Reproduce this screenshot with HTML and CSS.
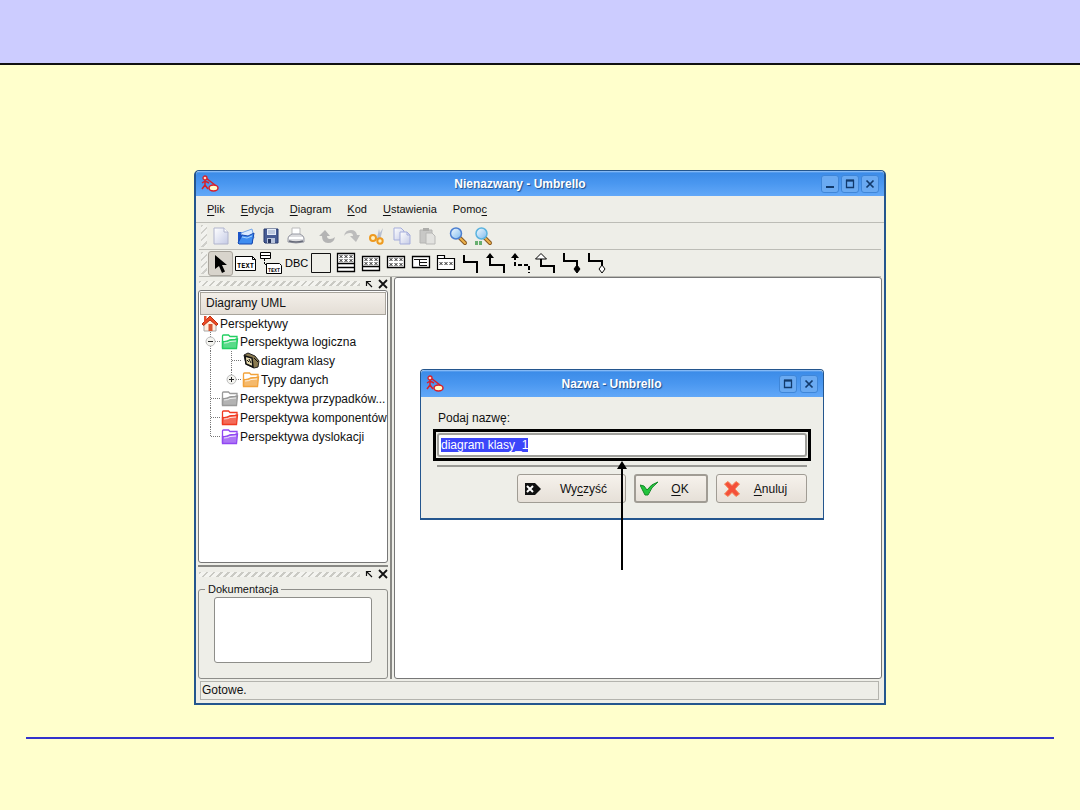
FILE: index.html
```html
<!DOCTYPE html>
<html lang="pl">
<head>
<meta charset="utf-8">
<title>Nienazwany - Umbrello</title>
<link rel="stylesheet" href="styles.css">
</head>
<body>
<svg class="defs" aria-hidden="true">
  <defs>
    <linearGradient id="paper" x1="0" y1="0" x2="1" y2="1"><stop offset="0" stop-color="#fff"/><stop offset="1" stop-color="#c5cbe6"/></linearGradient>
    <linearGradient id="lens" x1="0" y1="0" x2="1" y2="1"><stop offset="0" stop-color="#f4fbff"/><stop offset="1" stop-color="#7db9ee"/></linearGradient>
    <symbol id="app" viewBox="0 0 18 18">
      <path d="M4 5v5M1 8l3-2 4 2M4 10l-3 4M4 10l3 4M5 3l9 7" fill="none" stroke="#d8202a" stroke-width="1.5"/>
      <circle cx="4" cy="3" r="2" fill="#ffd9c8" stroke="#d8202a" stroke-width="1.3"/>
      <ellipse cx="12.500" cy="13" rx="4.500" ry="3" fill="#fffbc8" stroke="#d8202a" stroke-width="1.5"/>
    </symbol>
    <symbol id="folder" viewBox="0 0 18 17">
      <path d="M1.500 15V3q0-1 1-1h5l1.500 1.500h7V7" fill="#fff" fill-opacity=".6" stroke="currentColor" stroke-width="1.300"/>
      <path d="M1.500 15.500V8.500q4 .5 7-1.500l8-1-1 9.500z" fill="currentColor" fill-opacity=".75" stroke="currentColor" stroke-width="1.300"/>
      <path d="M3 5.500h11M3 10q4 0 6-1.500l6-.5" fill="none" stroke="#fff" stroke-opacity=".8"/>
    </symbol>
    <symbol id="xrow" viewBox="0 0 13 3" overflow="visible">
      <path d="M0 0l3 3M3 0L0 3M5 0l3 3M8 0L5 3M10 0l3 3M13 0l-3 3" stroke="#111" stroke-width=".9"/>
    </symbol>
    <symbol id="float" viewBox="0 0 8 8"><path d="M1.500 6V1.500H6M1.500 1.500L7 7" fill="none" stroke="#111" stroke-width="1.200"/></symbol>
    <symbol id="cross" viewBox="0 0 10 10"><path d="M1 1l8 8M9 1L1 9" fill="none" stroke="#111" stroke-width="1.800"/></symbol>
    <symbol id="wmin" viewBox="0 0 10 10"><path d="M1 8h8" stroke="#123a6c" stroke-width="2"/></symbol>
    <symbol id="wmax" viewBox="0 0 10 10"><path d="M1.500 1.500h7v7h-7z" fill="none" stroke="#123a6c" stroke-width="1.300"/><path d="M1 1.500h8" stroke="#123a6c" stroke-width="2"/></symbol>
    <symbol id="wclose" viewBox="0 0 10 10"><path d="M1.500 1.500l7 7M8.500 1.500l-7 7" stroke="#123a6c" stroke-width="1.700"/></symbol>
  </defs>
</svg>

<header class="slide-head"></header>
<main class="slide">
  <section class="window">
    <div class="titlebar">
      <svg class="app-icon"><use href="#app"/></svg>
      <h1 class="caption">Nienazwany - Umbrello</h1>
      <div class="win-buttons">
        <button aria-label="Minimalizuj"><svg><use href="#wmin"/></svg></button>
        <button aria-label="Maksymalizuj"><svg><use href="#wmax"/></svg></button>
        <button aria-label="Zamknij"><svg><use href="#wclose"/></svg></button>
      </div>
    </div>

    <nav class="menubar">
      <button><u>P</u>lik</button>
      <button><u>E</u>dycja</button>
      <button><u>D</u>iagram</button>
      <button><u>K</u>od</button>
      <button><u>U</u>stawienia</button>
      <button>Pomo<u>c</u></button>
    </nav>

    <div class="toolbar">
      <span class="grip"></span>
      <button aria-label="Nowy"><svg viewBox="0 0 24 24"><path d="M5 4h10l4 4v12H5z" fill="url(#paper)" stroke="#b0b4cc"/><path d="M15 4v4h4" fill="#fff" stroke="#b0b4cc"/></svg></button>
      <button aria-label="Otwórz"><svg viewBox="0 0 24 24"><path d="M4 8h6l2 2h7v9H4z" fill="#1b54c8"/><path d="M7 9l11-4 2 9-9 3z" fill="#dcecff" stroke="#78a8e8"/><path d="M4 19l4-8 6 1 6-3-2 11H5z" fill="#3f8df0" stroke="#1748b0"/><path d="M8 13l5 1 5-2" fill="none" stroke="#a6d3ff"/></svg></button>
      <button aria-label="Zapisz"><svg viewBox="0 0 24 24"><path d="M5 5h14v14H6l-1-1z" fill="#475c94" stroke="#27386c"/><path d="M8 5h9v6H8z" fill="#e4ecf8"/><path d="M9 7h7M9 9h7" stroke="#98a8c8"/><path d="M8 14h8v5H8z" fill="#b8c4dc"/><path d="M9 15h3v4H9z" fill="#26345c"/></svg></button>
      <button aria-label="Drukuj"><svg viewBox="0 0 24 24"><path d="M8 4h8v8H8z" fill="#fff" stroke="#bbb"/><path d="M5 12l3-2h8l3 2 1 2v4q-8 2-16 0v-4z" fill="#dcdcdf" stroke="#999ba5"/><path d="M5 14h14" stroke="#fff" stroke-width="2"/><path d="M5 17q7 2 14 0" stroke="#666a78" fill="none" stroke-width="1.500"/></svg></button>
      <span class="gap"></span>
      <button aria-label="Cofnij"><svg viewBox="0 0 24 24"><path d="M4 12l6-6 5 6h-3q0 3 3 3 3 0 5-2-1 6-7 6-6 0-6-7z" fill="#b4b4b4"/></svg></button>
      <button aria-label="Ponów"><svg viewBox="0 0 24 24"><path d="M20 11l-4 7-6-6h3q0-3-3-3-4 0-6 3 1-6 7-6 5 0 6 5z" fill="#bcbcbc"/></svg></button>
      <button aria-label="Wytnij"><svg viewBox="0 0 24 24"><path d="M11 15L18 4l-3 12zM12 14L14 5l2 9z" fill="#b6bed0"/><circle cx="8" cy="14" r="3" fill="#fff0c0" stroke="#ee9a20" stroke-width="2"/><circle cx="15" cy="17" r="2.700" fill="#fff0c0" stroke="#ee9a20" stroke-width="2"/></svg></button>
      <button aria-label="Kopiuj"><svg viewBox="0 0 24 24"><path d="M4 4h7l3 3v9H4z" fill="url(#paper)" stroke="#a5addb"/><path d="M10 8h7l3 3v9H10z" fill="url(#paper)" stroke="#a5addb"/><path d="M17 8v3h3" fill="none" stroke="#a5addb"/></svg></button>
      <button aria-label="Wklej"><svg viewBox="0 0 24 24"><path d="M5 6h12v13H5z" fill="#c8c8c6" stroke="#b4b4b2"/><path d="M8 4h6v3H8z" fill="#adadaa"/><path d="M11 9h6l3 3v8h-9z" fill="#e2e2df" stroke="#b8b8b6"/></svg></button>
      <span class="gap"></span>
      <button aria-label="Powiększ"><svg viewBox="0 0 24 24"><path d="M14 14l5 5" stroke="#8a5a20" stroke-width="4" stroke-linecap="round"/><path d="M14 14l5 5" stroke="#eeb34c" stroke-width="2" stroke-linecap="round"/><circle cx="10" cy="9.500" r="5.500" fill="url(#lens)" stroke="#4c7fd0" stroke-width="1.500"/></svg></button>
      <button aria-label="Skala 100%"><svg viewBox="0 0 24 24"><path d="M14 14l5 5" stroke="#8a5a20" stroke-width="4" stroke-linecap="round"/><path d="M14 14l5 5" stroke="#eeb34c" stroke-width="2" stroke-linecap="round"/><circle cx="10.500" cy="9.500" r="5.500" fill="url(#lens)" stroke="#5ab3df" stroke-width="1.500"/><path d="M4 18h3M8 18h3M4 20h3M8 20h3" stroke="#3c9b48" stroke-width="1.500"/></svg></button>
    </div>

    <div class="toolbar">
      <span class="grip"></span>
      <button class="pressed" aria-label="Wybierz"><svg viewBox="0 0 24 24"><path d="M6 3v14l4-3 3 7 3-1.500-3-6.500h5z" fill="#000"/></svg></button>
      <button aria-label="Notatka"><svg viewBox="0 0 24 24"><path d="M1.500 5.500h17l3 3v11h-20z" fill="#fff" stroke="#000"/><path d="M18.500 5.500v3h3" fill="none" stroke="#000"/><text x="3" y="17" class="tiny">TEXT</text></svg></button>
      <button aria-label="Kotwica"><svg viewBox="0 0 24 24"><path d="M1.500 1.500h10v6h-10zM1.500 4.500h10" fill="#fff" stroke="#000"/><path d="M5.500 8v5.500H9" fill="none" stroke="#000" stroke-dasharray="2 1"/><path d="M7.500 12.500h13l2 2v8h-15z" fill="#fff" stroke="#000"/><text x="9" y="21" class="mini">TEXT</text></svg></button>
      <button aria-label="Etykieta"><svg viewBox="0 0 24 24"><text x="1" y="16" class="dbc">DBC</text></svg></button>
      <button aria-label="Ramka"><svg viewBox="0 0 24 24"><path d="M2.500 2.500h19v19h-19z" fill="none" stroke="#111"/></svg></button>
      <button aria-label="Klasa"><svg viewBox="0 0 24 24"><path d="M3.500 2.500h17v18h-17zM3.500 12.500h17M3.500 16.500h17" fill="#fff" stroke="#000" stroke-width="1.300"/><use href="#xrow" x="5.500" y="4" width="13" height="3"/><use href="#xrow" x="5.500" y="8" width="13" height="3"/></svg></button>
      <button aria-label="Interfejs"><svg viewBox="0 0 24 24"><path d="M3.500 5.500h17v14h-17zM3.500 15.500h17" fill="#fff" stroke="#000" stroke-width="1.300"/><use href="#xrow" x="5.500" y="7" width="13" height="3"/><use href="#xrow" x="5.500" y="11" width="13" height="3"/></svg></button>
      <button aria-label="Typ danych"><svg viewBox="0 0 24 24"><path d="M3.500 5.500h17v11h-17z" fill="#fff" stroke="#000" stroke-width="1.300"/><use href="#xrow" x="5.500" y="7" width="13" height="3"/><use href="#xrow" x="5.500" y="12" width="13" height="3"/></svg></button>
      <button aria-label="Wyliczenie"><svg viewBox="0 0 24 24"><path d="M3.500 5.500h17v11h-17z" fill="#fff" stroke="#000" stroke-width="1.300"/><path d="M5 8.500h13M10.500 9v5.500H18M10 11.500h8" fill="none" stroke="#111"/></svg></button>
      <button aria-label="Pakiet"><svg viewBox="0 0 24 24"><path d="M3.500 7.500v-3h7v3h10v11h-17v-11h7" fill="#fff" stroke="#000" stroke-width="1.200"/><use href="#xrow" x="5.500" y="11" width="13" height="3"/></svg></button>
      <button aria-label="Asocjacja"><svg viewBox="0 0 24 24"><path d="M5 4h0v7h13v11" class="wire"/></svg></button>
      <button aria-label="Asocjacja skierowana"><svg viewBox="0 0 24 24"><path d="M6 4v10h14v8" class="wire"/><path d="M2 7l4-5 4 5z"/></svg></button>
      <button aria-label="Zależność"><svg viewBox="0 0 24 24"><path d="M6 5v9h14v8" class="wire" stroke-dasharray="4 2"/><path d="M2 7l4-5 4 5z"/></svg></button>
      <button aria-label="Uogólnienie"><svg viewBox="0 0 24 24"><path d="M7 8v7h13v7" class="wire"/><path d="M1.500 8l5.500-5.500L12.500 8z" fill="#fff" stroke="#000"/></svg></button>
      <button aria-label="Kompozycja"><svg viewBox="0 0 24 24"><path d="M5 2v8h13v8" class="wire"/><path d="M18 14l3 4-3 4-3-4z" stroke="#000"/></svg></button>
      <button aria-label="Agregacja"><svg viewBox="0 0 24 24"><path d="M5 2v8h13v5" class="wire"/><path d="M18 14l3 4-3 4-3-4z" fill="#fff" stroke="#000"/></svg></button>
    </div>

    <div class="work">
      <aside class="docks">
        <div class="dock-head"><span class="dots"></span><button aria-label="Odczep"><svg class="s8"><use href="#float"/></svg></button><button aria-label="Zamknij panel"><svg class="s10"><use href="#cross"/></svg></button></div>
        <section class="tree">
          <h2 class="tree-head">Diagramy UML</h2>
          <ul class="rows">
            <li><svg class="ico" viewBox="0 0 18 17"><path d="M3 8v8h12V8L9 3z" fill="#ffeedd" stroke="#a8a8a8"/><path d="M1 9l8-8 8 8-1.500 1.500L9 5l-6.500 5.500z" fill="#f04b24" stroke="#b83010"/><path d="M7.500 9h4v7h-4z" fill="#d85430"/><path d="M3 1h2.500v4L3 7z" fill="#e45030"/></svg>Perspektywy</li>
            <li><svg class="branch" viewBox="0 0 20 19"><path d="M9.500 0v19M10 9.500h10"/><circle cx="9.500" cy="9.500" r="4.500"/><path class="sign" d="M7 9.500h5"/></svg><svg class="ico green"><use href="#folder"/></svg>Perspektywa logiczna</li>
            <li><svg class="branch wide" viewBox="0 0 41 19"><path d="M9.500 0v19M30.500 0v19M31 9.500h10"/></svg><svg class="ico" viewBox="0 0 18 17"><path d="M2 3l4-2 7 3 4 5-1 6-4 1-8-4z" fill="#8a7a50" stroke="#222"/><path d="M3 4l7 2 1 9-7-3z" fill="#e8dcb0" stroke="#111" stroke-width="1.500"/><path d="M5 8l2 2M7 7l2 4M12 6l4 4" stroke="#111"/></svg>diagram klasy</li>
            <li><svg class="branch wide" viewBox="0 0 41 19"><path d="M9.500 0v19M30.500 0v9M31 9.500h10"/><circle cx="30.500" cy="9.500" r="4.500"/><path class="sign" d="M28 9.500h5M30.500 7v5"/></svg><svg class="ico orange"><use href="#folder"/></svg>Typy danych</li>
            <li><svg class="branch" viewBox="0 0 20 19"><path d="M9.500 0v19M10 9.500h10"/></svg><svg class="ico gray"><use href="#folder"/></svg>Perspektywa przypadków...</li>
            <li><svg class="branch" viewBox="0 0 20 19"><path d="M9.500 0v19M10 9.500h10"/></svg><svg class="ico red"><use href="#folder"/></svg>Perspektywa komponentów</li>
            <li><svg class="branch" viewBox="0 0 20 19"><path d="M9.500 0v9M10 9.500h10"/></svg><svg class="ico purple"><use href="#folder"/></svg>Perspektywa dyslokacji</li>
          </ul>
        </section>
        <div class="dock-head lower"><span class="dots"></span><button aria-label="Odczep"><svg class="s8"><use href="#float"/></svg></button><button aria-label="Zamknij panel"><svg class="s10"><use href="#cross"/></svg></button></div>
        <fieldset class="docs">
          <legend><label for="doc">Dokumentacja</label></legend>
          <textarea id="doc"></textarea>
        </fieldset>
      </aside>

      <section class="canvas">
        <form class="dialog">
          <div class="titlebar tall">
            <svg class="app-icon"><use href="#app"/></svg>
            <h2 class="caption">Nazwa - Umbrello</h2>
            <div class="win-buttons">
              <button type="button" aria-label="Maksymalizuj"><svg><use href="#wmax"/></svg></button>
              <button type="button" aria-label="Zamknij"><svg><use href="#wclose"/></svg></button>
            </div>
          </div>
          <div class="dialog-body">
            <label class="prompt" for="name">Podaj nazwę:</label>
            <div class="marked"><input id="name" type="text" value="diagram klasy_1" autofocus onfocus="this.select()"></div>
            <div class="rule"></div>
            <div class="actions">
              <button type="button" class="clear"><svg viewBox="0 0 18 18"><path d="M1 3h10l6 6-6 6H1z" fill="#111"/><path d="M3 6l6 6M9 6l-6 6" stroke="#fff" stroke-width="2"/></svg><span>Wy<u>c</u>zyść</span></button>
              <button type="submit" class="ok"><svg viewBox="0 0 18 18"><path d="M0 5l4 1 3 4q4-6 11-8-7 5-10 13L5 15z" fill="#22c43c" stroke="#128a26"/></svg><span><u>O</u>K</span></button>
              <button type="button" class="cancel"><svg viewBox="0 0 18 18"><path d="M1.500 4l3.500-2.500 4 4 4-4L16.500 4 12 9l4.500 5-3.500 2.500-4-4-4 4L1.500 14 6 9z" fill="#f4503a" stroke="#f68a5c"/></svg><span><u>A</u>nuluj</span></button>
            </div>
          </div>
          <svg class="arrow" viewBox="0 0 10 109"><path d="M5 0l5 8H0zM4 7h2v102H4z"/></svg>
        </form>
      </section>
    </div>
    <footer class="status">Gotowe.</footer>
  </section>
  <hr class="foot-line">
</main>
</body>
</html>
```

FILE: styles.css
```css
* { box-sizing: border-box; }
body {
  margin: 0;
  min-height: 100vh;
  background: #ffffcc;
  color: #111;
  font: 12px/16px "Liberation Sans", Arial, sans-serif;
}
button, input, textarea { font: inherit; color: inherit; }
button { padding: 0; border: 0; background: none; }
svg { display: block; flex: none; }
h1, h2 { margin: 0; font-size: 12px; }
u { text-underline-offset: 2px; }
.defs { position: absolute; width: 0; height: 0; }

.slide-head { height: 65px; background: #ccccff; border-bottom: 2px solid #111; }
.slide { padding: 105px 26px 0; }
.foot-line { height: 2px; margin: 32px 0 0; border: 0; background: #3333cc; }

.window {
  margin: 0 168px;
  border: 2px solid #24568e;
  border-top-width: 1px;
  border-radius: 5px 5px 0 0;
  background: #eeeee8;
}
.titlebar {
  display: flex;
  align-items: center;
  height: 25px;
  padding: 0 5px;
  background: linear-gradient(#9cc8fa 0, #3c8ce8 2px, #4a97f0 50%, #62a8f8);
  border-radius: 4px 4px 0 0;
}
.titlebar.tall { height: 27px; }
.app-icon { width: 18px; height: 18px; }
.caption {
  flex: 1;
  text-align: center;
  color: #fff;
  font-size: 12px;
  text-shadow: 1px 1px 1px #1d4c8c;
}
.win-buttons { display: flex; gap: 2px; }
.tall .win-buttons { gap: 3px; }
.win-buttons button {
  display: grid;
  place-items: center;
  width: 18px;
  height: 18px;
  border: 1px solid #3f86d8;
  border-radius: 3px;
  background: #6aaaf2;
}
.win-buttons svg { width: 10px; height: 10px; }

.menubar {
  display: flex;
  gap: 16px;
  height: 27px;
  padding: 0 11px;
  border-bottom: 1px solid #bcbcb6;
  font-size: 11px;
}

.toolbar { display: flex; align-items: center; height: 27px; margin: 0 3px; border-bottom: 1px solid #bcbcb6; }
.toolbar button { display: grid; place-items: center; width: 25px; height: 25px; }
.toolbar svg { width: 24px; height: 24px; }
.toolbar .pressed { border: 1px solid #a8a49c; border-radius: 3px; background: #d8d4cc; }
.gap { width: 6px; }
.grip {
  width: 6px;
  height: 22px;
  margin: 0 1px 0 2px;
  background: repeating-linear-gradient(135deg, #cfcfca 0 2px, #f2f2ee 2px 5px);
}
.tiny { font: bold 7px "DejaVu Sans Mono", monospace; }
.mini { font: bold 5px "DejaVu Sans Mono", monospace; }
.dbc { font: 11px "Liberation Sans", Arial, sans-serif; }
.wire { fill: none; stroke: #000; stroke-width: 2; }

.work { display: flex; gap: 2px; height: 402px; padding: 0 2px; }
.docks {
  display: flex;
  flex-direction: column;
  width: 194px;
  padding-right: 2px;
  border-right: 2px solid #888884;
}
.dock-head { display: flex; align-items: center; gap: 5px; height: 13px; padding-left: 1px; }
.dock-head.lower { height: 16px; margin-top: 2px; border-top: 2px solid #888884; }
.dots {
  flex: 1;
  height: 5px;
  background: repeating-linear-gradient(135deg, #cacac4 0 2px, #f4f4f0 2px 5px);
}
.s8 { width: 8px; height: 8px; }
.s10 { width: 10px; height: 10px; }
.tree { flex: 1; border: 1px solid #777; border-radius: 3px; background: #fff; }
.tree-head {
  height: 23px;
  margin: 1px 1px 0;
  padding: 0 5px;
  border: 1px solid #a8a49c;
  background: linear-gradient(#f3efe9, #e4ded6);
  font-weight: normal;
  line-height: 21px;
}
.rows { margin: 0; padding: 0 0 0 2px; list-style: none; }
.rows li { display: flex; align-items: center; height: 19px; white-space: nowrap; }
.rows li:first-child { height: 17px; }
.ico { width: 18px; height: 17px; margin-right: 1px; }
.branch { width: 20px; height: 19px; fill: none; stroke: #777; stroke-dasharray: 1 1; }
.branch.wide { width: 41px; }
.branch circle { fill: #f4f4f0; stroke: #bbb; stroke-dasharray: none; }
.branch .sign { stroke: #222; stroke-dasharray: none; }
.green { color: #22cf62; }
.orange { color: #f2a23a; }
.gray { color: #999; }
.red { color: #f03a22; }
.purple { color: #9147f2; }

.docs { margin: 0; padding: 0 15px 15px; border: 1px solid #8e8e8a; border-radius: 3px; }
.docs legend { margin-left: -9px; padding: 0 3px; font-size: 11px; }
.docs textarea {
  display: block;
  width: 100%;
  height: 66px;
  border: 1px solid #8e8e8a;
  border-radius: 3px;
  background: #fff;
  resize: none;
}

.canvas { position: relative; flex: 1; border: 1px solid #777; border-radius: 3px; background: #fff; }
.dialog {
  position: absolute;
  top: 91px;
  left: 25px;
  width: 404px;
  border: 1px solid #24568e;
  border-bottom-width: 2px;
  border-radius: 4px 4px 0 0;
  background: #eeeee8;
}
.dialog-body { padding: 13px 12px 15px; }
.prompt { display: block; margin-left: 5px; }
.marked { margin-top: 3px; padding: 1px; border: 3px solid #000; }
.marked input {
  display: block;
  width: 100%;
  height: 24px;
  padding: 0 2px;
  border: 2px solid #a0a09c;
  border-radius: 3px;
  outline: 0;
  background: #fff;
}
.marked input::selection { background: #3c46fa; color: #fff; }
.rule { height: 2px; margin: 4px 4px 7px; background: #9a9a96; }
.actions { display: flex; justify-content: flex-end; gap: 8px; padding-right: 4px; }
.actions button {
  display: flex;
  align-items: center;
  height: 29px;
  padding: 0 6px;
  border: 1px solid #a09c94;
  border-radius: 3px;
  background: linear-gradient(#f6f2ec, #e6e0d8);
}
.actions span { flex: 1; text-align: center; }
.actions svg { width: 18px; height: 18px; }
.actions .clear { width: 109px; padding-right: 0; }
.actions .ok { width: 74px; padding: 0 4px; border: 2px solid #a09c94; }
.actions .cancel { width: 91px; }
.arrow { position: absolute; top: 91px; left: 196px; width: 10px; height: 109px; }

.status {
  height: 19px;
  margin: 2px 5px 3px 4px;
  padding: 0 1px;
  border: 1px solid #b4b4ae;
}
```
